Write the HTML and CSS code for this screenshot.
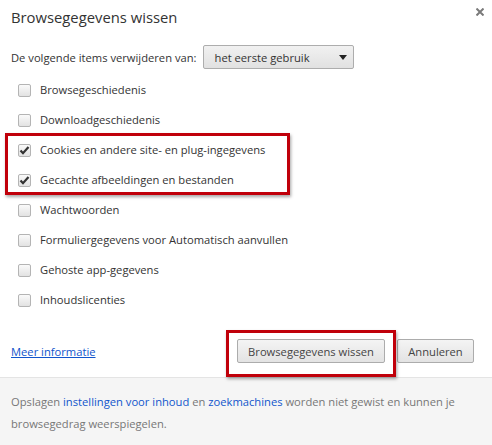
FILE: index.html
```html
<!DOCTYPE html>
<html lang="nl">
<head>
<meta charset="utf-8">
<title>Browsegegevens wissen</title>
<link rel="stylesheet" href="styles.css">
</head>
<body>
<div class="dialog">
  <div class="header">
    <h1 class="title">Browsegegevens wissen</h1>
    <button class="close" aria-label="Sluiten">
      <svg width="8" height="8" viewBox="0 0 8 8"><path d="M0.5 0.5L7.5 7.5M7.5 0.5L0.5 7.5" stroke="#7a7a7a" stroke-width="2"/></svg>
    </button>
  </div>
  <div class="period">
    <span class="period-label">De volgende items verwijderen van:</span>
    <div class="select">
      <span>het eerste gebruik</span>
      <span class="arrow"></span>
    </div>
  </div>
  <div class="list">
    <div class="item"><span class="cb"></span><span class="lbl">Browsegeschiedenis</span></div>
    <div class="item"><span class="cb"></span><span class="lbl">Downloadgeschiedenis</span></div>
    <div class="group">
      <div class="item"><span class="cb checked"><svg width="11" height="9" viewBox="0 0 11 9"><path d="M1.5 4.5L4 7.2L9.5 1" fill="none" stroke="#333" stroke-width="2.2"/></svg></span><span class="lbl">Cookies en andere site- en plug-ingegevens</span></div>
      <div class="item"><span class="cb checked"><svg width="11" height="9" viewBox="0 0 11 9"><path d="M1.5 4.5L4 7.2L9.5 1" fill="none" stroke="#333" stroke-width="2.2"/></svg></span><span class="lbl">Gecachte afbeeldingen en bestanden</span></div>
    </div>
    <div class="item"><span class="cb"></span><span class="lbl">Wachtwoorden</span></div>
    <div class="item"><span class="cb"></span><span class="lbl">Formuliergegevens voor Automatisch aanvullen</span></div>
    <div class="item"><span class="cb"></span><span class="lbl">Gehoste app-gegevens</span></div>
    <div class="item"><span class="cb"></span><span class="lbl">Inhoudslicenties</span></div>
  </div>
  <div class="actions">
    <a class="more" href="#">Meer informatie</a>
    <div class="buttons">
      <span class="highlight"><button class="btn">Browsegegevens wissen</button></span>
      <button class="btn">Annuleren</button>
    </div>
  </div>
  <div class="footer">
    <p class="line"><span>Opslagen</span> <a href="#">instellingen voor inhoud</a> <span>en</span> <a href="#">zoekmachines</a> <span>worden niet gewist en kunnen je</span></p>
    <p class="line"><span>browsegedrag weerspiegelen.</span></p>
  </div>
</div>
</body>
</html>
```

FILE: styles.css
```css
* { box-sizing: border-box; }
html, body { margin: 0; padding: 0; background: #fff; }
body {
  font-family: "Open Sans", "Noto Sans", sans-serif;
  font-size: 11.2px;
  color: #333;
}
.dialog { width: 492px; height: 445px; display: flex; flex-direction: column; }
.header { display: flex; justify-content: space-between; align-items: flex-start; padding: 7px 8px 0 11px; }
.title { margin: 0; font-size: 14.8px; font-weight: normal; line-height: 20px; color: #333; }
.close { border: 0; background: none; padding: 0; margin-top: 1px; width: 8px; height: 8px; display: block; }
.close svg { display: block; }
.period { display: flex; align-items: center; padding-left: 11px; margin-top: 18px; height: 24px; }
.period-label { margin-right: 6px; }
.select {
  width: 151px; height: 24px; border: 1px solid #adadad; border-radius: 2px;
  background: linear-gradient(#f1f1f1, #e1e1e1);
  display: flex; align-items: center; justify-content: space-between; padding: 0 6px 0 11px;
}
.arrow { width: 0; height: 0; border-left: 4px solid transparent; border-right: 4px solid transparent; border-top: 5px solid #222; }
.list { margin-top: 6px; }
.group { position: relative; }
.group::after {
  content: ""; position: absolute; left: 5px; right: 202px; top: -2px; bottom: 0;
  border: 3px solid #c0000a; box-shadow: 1px 2px 3px rgba(0,0,0,0.35);
}
.item { height: 30px; display: flex; align-items: center; padding-left: 18px; }
.cb {
  width: 13px; height: 13px; border: 1px solid #b4b4b4; border-radius: 2px;
  background: linear-gradient(#fafafa, #e2e2e2); margin-right: 9px; position: relative; flex: none;
}
.cb svg { position: absolute; left: 0; top: 1px; }
.lbl { line-height: 16px; }
.actions { display: flex; justify-content: space-between; align-items: center; padding: 0 18px 0 11px; margin-top: 24px; height: 24px; }
.more { color: #15c; text-decoration: underline; }
.buttons { display: flex; align-items: center; gap: 12px; }
.highlight { position: relative; display: block; }
.highlight::after {
  content: ""; position: absolute; left: -11px; right: -11px; top: -9px; bottom: -14px;
  border: 3px solid #c0000a; box-shadow: 1px 2px 3px rgba(0,0,0,0.35);
}
.btn {
  font-family: inherit; font-size: 11.2px; color: #444; height: 24px; padding: 0 8px;
  border: 1px solid #acacac; border-radius: 2px; background: linear-gradient(#f4f4f4, #e3e3e3);
  display: block; white-space: nowrap;
}
.highlight .btn { width: 148px; }
.actions .buttons > .btn { width: 77px; }
.footer {
  margin-top: auto; height: 68px; background: #f5f5f5; border-top: 1px solid #e4e4e4;
  padding: 13px 11px 0 11px; line-height: 22px; color: #777;
}
.line { margin: 0; white-space: nowrap; }
.footer a { color: #15c; text-decoration: none; }
```
